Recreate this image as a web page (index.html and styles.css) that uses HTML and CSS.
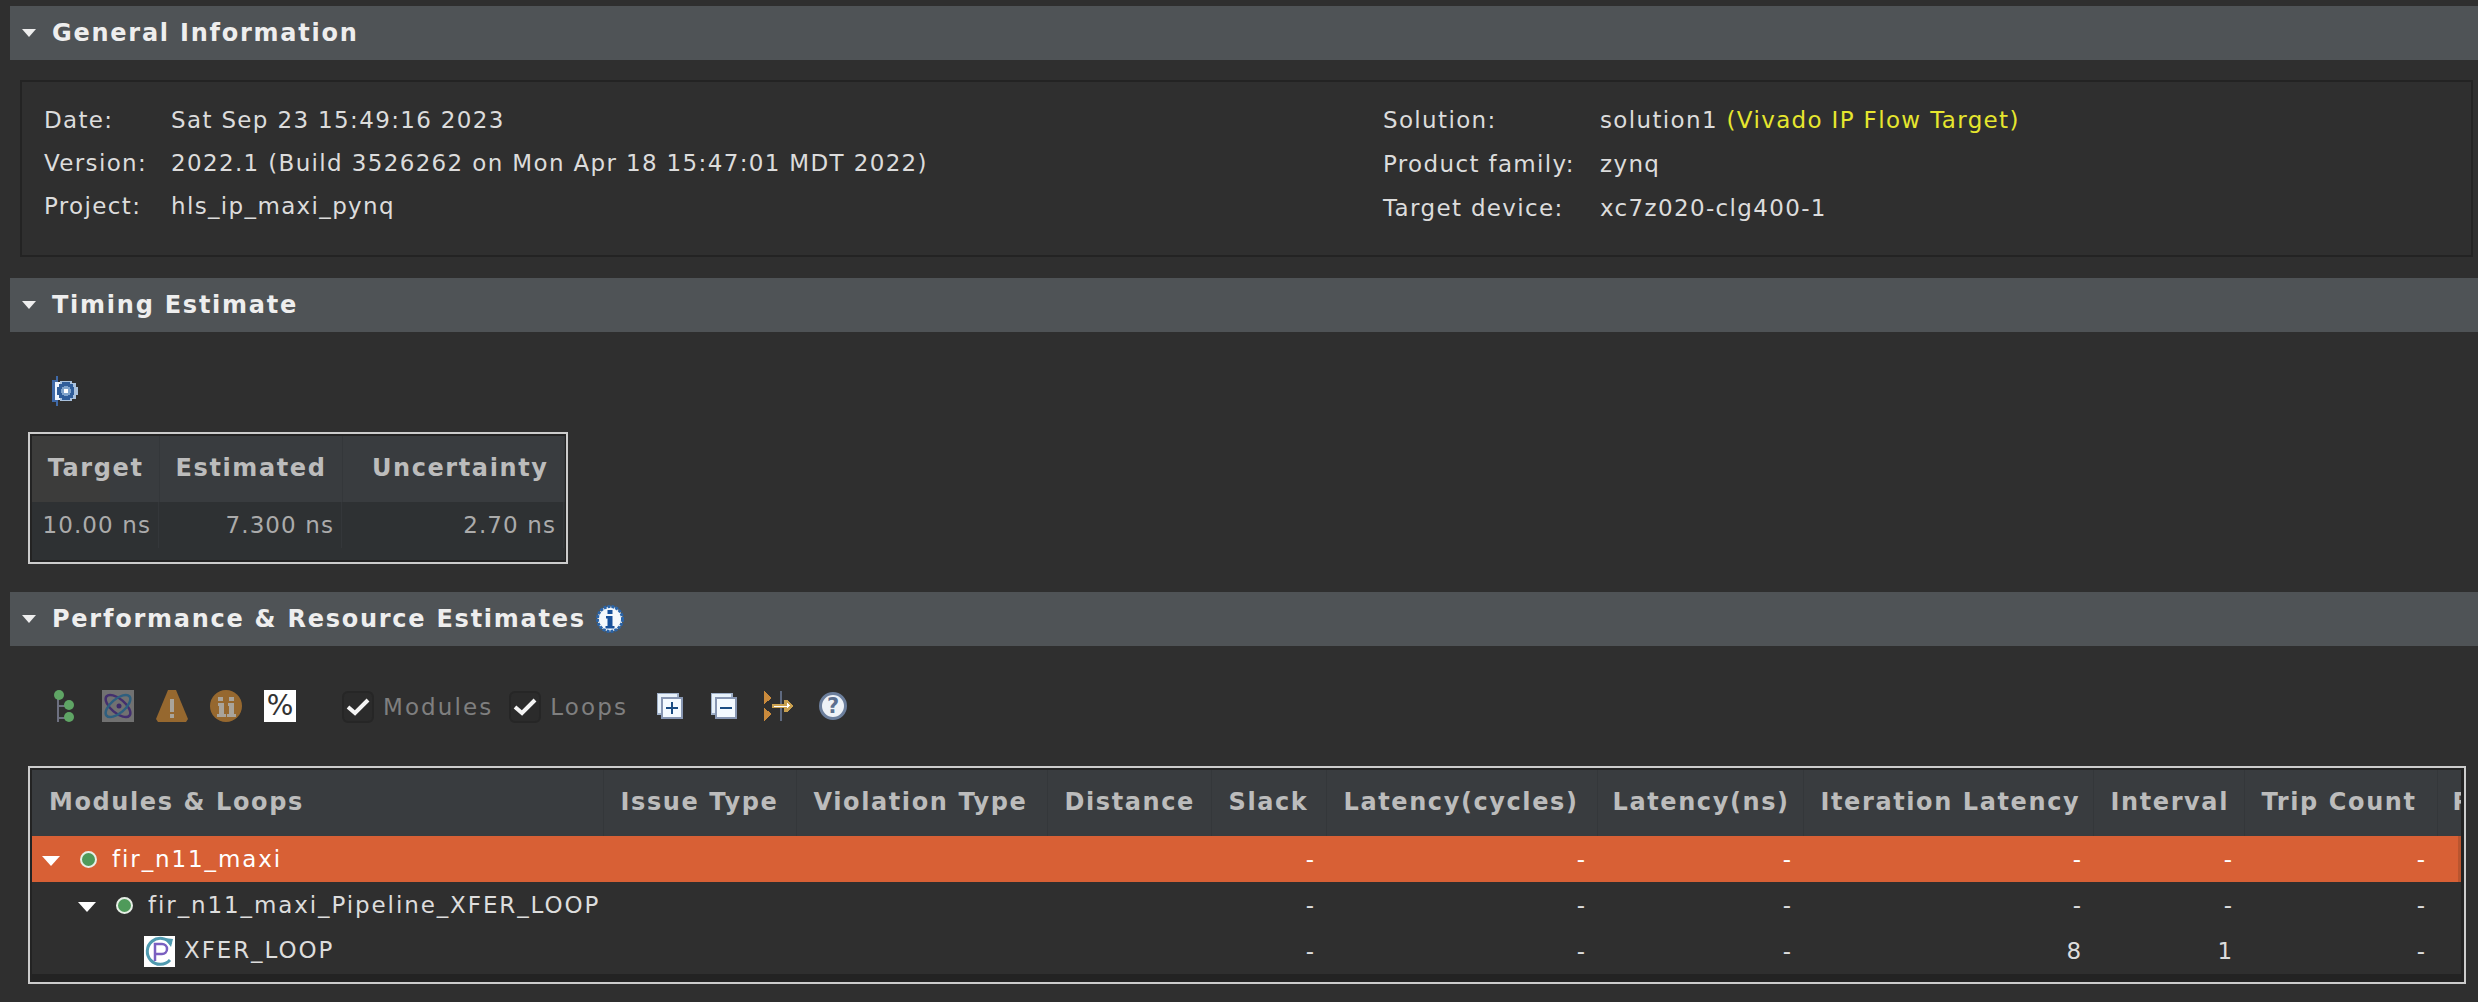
FILE: index.html
```html
<!DOCTYPE html>
<html lang="en">
  <head>
    <meta charset="UTF-8" />
    <title>Synthesis Summary</title>
    <link rel="stylesheet" href="styles.css">
  </head>
  <body>
    <h2 class="bar"><span class="arrow"></span>General Information</h2>
    <section class="info">
      <dl class="info-left">
        <dt>Date:</dt><dd>Sat Sep 23 15:49:16 2023</dd>
        <dt>Version:</dt><dd>2022.1 (Build 3526262 on Mon Apr 18 15:47:01 MDT 2022)</dd>
        <dt>Project:</dt><dd>hls_ip_maxi_pynq</dd>
      </dl>
      <dl class="info-right">
        <dt>Solution:</dt><dd>solution1 <span class="flow">(Vivado IP Flow Target)</span></dd>
        <dt>Product family:</dt><dd>zynq</dd>
        <dt>Target device:</dt><dd>xc7z020-clg400-1</dd>
      </dl>
    </section>

    <h2 class="bar"><span class="arrow"></span>Timing Estimate</h2>
    <section class="timing">
      <svg class="clock-icon" width="28" height="30" viewBox="0 0 28 30" shape-rendering="crispEdges">
        <rect x="4" y="0" width="2" height="30" fill="#3f69a8"/>
        <rect x="0" y="4" width="6" height="22" fill="#3f69a8"/>
        <rect x="3" y="6" width="10" height="18" fill="#eef5ff"/>
        <path d="M8 5h12v2h4v4h2v8h-2v4h-4v2H8z" fill="#a9c1dc"/>
        <path d="M7 8h3V6h8v2h3v3h1v8h-1v3h-3v2h-8v-2H7v-3H5v-8h2z" fill="#2f5d9a"/>
        <circle cx="14" cy="15" r="5" fill="#7fa3cc"/>
        <rect x="12" y="13" width="4" height="4" fill="#fff"/>
      </svg>
      <div class="frame timing-frame">
        <table class="grid timing-grid">
          <colgroup><col class="t1"><col class="t2"><col class="t3"></colgroup>
          <thead>
            <tr><th class="tile">Target</th><th>Estimated</th><th>Uncertainty</th></tr>
          </thead>
          <tbody>
            <tr><td>10.00 ns</td><td>7.300 ns</td><td>2.70 ns</td></tr>
          </tbody>
        </table>
      </div>
    </section>

    <h2 class="bar"><span class="arrow"></span>Performance &amp; Resource Estimates
      <svg class="bar-info" width="28" height="28" viewBox="0 0 28 28">
        <circle cx="14" cy="14" r="12.5" fill="#f4f8fc" stroke="#2a64a8" stroke-width="3" stroke-dasharray="3 1"/>
        <rect x="11.5" y="5" width="5" height="4" fill="#17509a"/>
        <path d="M10 11h6.500v10h2v2.500h-9V21h2v-7.500h-1.500z" fill="#17509a"/>
      </svg>
    </h2>
    <section class="perf">
      <div class="toolbar">
        <svg class="tool w20" width="20" height="32" viewBox="0 0 20 32">
          <path d="M4 8v24M4 16h12M4 28h12" stroke="#6d7080" stroke-width="2" fill="none"/>
          <circle cx="5" cy="5" r="5" fill="#5fa565"/>
          <circle cx="15" cy="15" r="5" fill="#5fa565"/>
          <circle cx="15" cy="27" r="5" fill="#5fa565"/>
        </svg>
        <svg class="tool w32" width="32" height="32" viewBox="0 0 32 32">
          <rect width="32" height="32" fill="#717171"/>
          <ellipse cx="16" cy="16" rx="15" ry="7" transform="rotate(40 16 16)" fill="none" stroke="#432f6e" stroke-width="2.500"/>
          <ellipse cx="16" cy="16" rx="15" ry="7" transform="rotate(-40 16 16)" fill="none" stroke="#2e5f7f" stroke-width="2.500"/>
          <circle cx="17" cy="16" r="2.500" fill="#3e2a6a"/>
        </svg>
        <svg class="tool w32" width="32" height="32" viewBox="0 0 32 32">
          <path d="M12 0h8l12 29-2 3H2l-2-3z" fill="#96682f"/>
          <rect x="14" y="9" width="4" height="13" fill="#a9a49b"/>
          <rect x="14" y="24" width="4" height="4" fill="#a9a49b"/>
        </svg>
        <svg class="tool w32" width="32" height="32" viewBox="0 0 32 32">
          <circle cx="16" cy="16" r="16" fill="#96682f"/>
          <path d="M8 7h5v4H8zM19 7h5v4h-5zM8 13h6v11h2v3H7v-3h2v-8H8zM18 13h6v11h2v3h-9v-3h2v-8h-1z" fill="#a9a49b"/>
        </svg>
        <span class="percent">%</span>
        <label class="check"><svg width="32" height="32" viewBox="0 0 32 32"><rect x="1" y="1" width="30" height="30" rx="5" fill="#2b2b2b" stroke="#262626" stroke-width="2"/><path d="M6 16l7 6L26 9" fill="none" stroke="#f4f4f4" stroke-width="4"/></svg>Modules</label>
        <label class="check"><svg width="32" height="32" viewBox="0 0 32 32"><rect x="1" y="1" width="30" height="30" rx="5" fill="#2b2b2b" stroke="#262626" stroke-width="2"/><path d="M6 16l7 6L26 9" fill="none" stroke="#f4f4f4" stroke-width="4"/></svg>Loops</label>
        <svg class="tool w26 first-action" width="26" height="26" viewBox="0 0 26 26" shape-rendering="crispEdges">
          <rect x="0" y="0" width="21" height="21" fill="#e8f2fb" stroke="#9fb0c8" stroke-width="2"/>
          <rect x="5" y="5" width="20" height="20" fill="#f4faff" stroke="#8796b2" stroke-width="2"/>
          <path d="M9 14h12v2H9zM14 9h2v12h-2z" fill="#1a4c82"/>
        </svg>
        <svg class="tool w26 collapse" width="26" height="26" viewBox="0 0 26 26" shape-rendering="crispEdges">
          <rect x="0" y="0" width="21" height="21" fill="#e8f2fb" stroke="#9fb0c8" stroke-width="2"/>
          <rect x="5" y="5" width="20" height="20" fill="#f4faff" stroke="#8796b2" stroke-width="2"/>
          <path d="M9 14h12v2H9z" fill="#1a4c82"/>
        </svg>
        <svg class="tool fit" width="30" height="30" viewBox="0 0 30 30" shape-rendering="crispEdges">
          <path d="M0 0l8 7-8 6zM0 17l8 6-8 7z" fill="#c98a3c"/>
          <rect x="16" y="0" width="2" height="30" fill="#5f6a80"/>
          <path d="M8 13h12V9h3l7 6-7 6h-3v-4H8z" fill="#c9a04f"/>
          <path d="M10 15h13v-3l3 3-3 2v-1H10z" fill="#fff"/>
        </svg>
        <svg class="tool help" width="28" height="28" viewBox="0 0 28 28">
          <circle cx="14" cy="14" r="12.500" fill="#eef2f7" stroke="#6c7f9d" stroke-width="3"/>
          <text x="14" y="21" text-anchor="middle" class="help-mark">?</text>
        </svg>
      </div>

      <div class="frame modules-frame">
        <table class="grid modules-grid">
          <colgroup>
            <col class="m1"><col class="m2"><col class="m3"><col class="m4"><col class="m5"><col class="m6">
            <col class="m7"><col class="m8"><col class="m9"><col class="m10"><col class="m11">
          </colgroup>
          <thead>
            <tr>
              <th>Modules &amp; Loops</th><th>Issue Type</th><th>Violation Type</th><th>Distance</th><th>Slack</th>
              <th>Latency(cycles)</th><th class="tight">Latency(ns)</th><th>Iteration Latency</th><th>Interval</th><th>Trip Count</th><th>Pipelined</th>
            </tr>
          </thead>
          <tbody>
            <tr class="selected">
              <td class="name depth0"><span class="tri"></span><span class="dot"></span>fir_n11_maxi</td>
              <td></td><td></td><td></td><td>-</td><td>-</td><td>-</td><td>-</td><td>-</td><td>-</td><td></td>
            </tr>
            <tr>
              <td class="name depth1"><span class="tri"></span><span class="dot"></span>fir_n11_maxi_Pipeline_XFER_LOOP</td>
              <td></td><td></td><td></td><td>-</td><td>-</td><td>-</td><td>-</td><td>-</td><td>-</td><td></td>
            </tr>
            <tr>
              <td class="name depth2">
                <svg class="loop-icon" width="31" height="31" viewBox="0 0 31 31">
                  <rect width="31" height="31" fill="#fff"/>
                  <path d="M27 8A13 13 0 1 0 26 24" fill="none" stroke="#4f9ab0" stroke-width="3"/>
                  <path d="M20 2l9 1-2 8z" fill="#4f9ab0"/>
                  <path d="M11 25V8h7a5 5 0 0 1 0 10h-7" fill="none" stroke="#7a5fc0" stroke-width="2.500"/>
                </svg>XFER_LOOP</td>
              <td></td><td></td><td></td><td>-</td><td>-</td><td>-</td><td>8</td><td>1</td><td>-</td><td></td>
            </tr>
          </tbody>
        </table>
      </div>
    </section>
  </body>
</html>
```

FILE: styles.css
```css
body {
  margin: 0;
  padding-top: 6px;
  background-color: #2f2f2f;
  font-family: "DejaVu Sans", sans-serif;
  font-size: 23px;
  letter-spacing: 1.35px;
  color: #dcdcdc;
  overflow: hidden;
}

.bar {
  display: flex;
  align-items: center;
  height: 54px;
  margin: 0 0 0 10px;
  background-color: #4f5356;
  color: #eeeeee;
  font-size: 24px;
  font-weight: bold;
  letter-spacing: 1.75px;
}

.arrow {
  width: 0;
  height: 0;
  margin: 0 16px 0 12px;
  border-left: 7px solid transparent;
  border-right: 7px solid transparent;
  border-top: 8px solid #eeeeee;
}

.bar-info {
  margin-left: 10px;
}

/* general information */
.info {
  display: flex;
  box-sizing: border-box;
  height: 177px;
  margin: 20px 5px 21px 20px;
  padding: 16px 0 0 22px;
  border: 2px solid #232323;
}

.info dl {
  display: grid;
  align-items: center;
  margin: 0;
  align-self: flex-start;
}

.info dd {
  margin: 0;
  white-space: nowrap;
}

.info-left {
  grid-template-columns: 127px 1fr;
  grid-auto-rows: 43px;
  width: 1339px;
}

.info-right {
  grid-template-columns: 217px 1fr;
  grid-auto-rows: 44px;
}

.flow {
  color: #e6e62e;
}

/* timing */
.timing {
  padding: 44px 0 28px 0;
}

.clock-icon {
  display: block;
  margin: 0 0 26px 52px;
}

.frame {
  box-sizing: border-box;
  margin-left: 28px;
  border: 2px solid #cccccc;
  background-color: #232323;
  padding: 2px;
  overflow: hidden;
}

.timing-frame {
  width: 540px;
  height: 132px;
}

.modules-frame {
  width: 2438px;
  height: 218px;
}

.grid {
  table-layout: fixed;
  border-collapse: collapse;
  border-spacing: 0;
}

.grid th {
  height: 66px;
  box-sizing: border-box;
  padding: 0 17px 3px;
  background-color: #393c3f;
  border-right: 1px solid #34373a;
  color: #bcbcbc;
  font-size: 24px;
  font-weight: bold;
  letter-spacing: 1.6px;
  white-space: nowrap;
  overflow: hidden;
}

.grid th.tight {
  padding-left: 15px;
}

.grid td {
  height: 46px;
  padding: 0 10px;
  text-align: right;
  white-space: nowrap;
  overflow: hidden;
}

.timing-grid {
  width: 532px;
  height: 124px;
  background-color: #2e3133;
}

.timing-grid th {
  padding-left: 0;
  padding-right: 15px;
  text-align: right;
}

.timing-grid th.tile {
  background: linear-gradient(to right, #3c3c3b 78px, #393c3f 78px);
}

.timing-grid td {
  vertical-align: top;
  height: 58px;
  padding: 10px 8px 0 0;
  box-sizing: border-box;
  color: #ababab;
  letter-spacing: 1.1px;
  background: linear-gradient(#34373a, #34373a) right top / 1px 46px no-repeat;
}

.t1 { width: 127px; }
.t2 { width: 183px; }
.t3 { width: 222px; }

/* modules and loops */
.toolbar {
  display: flex;
  align-items: center;
  height: 32px;
  padding: 44px 0 44px 54px;
}

.tool {
  flex: none;
}

.w20 { margin-right: 28px; }
.w32 { margin-right: 22px; }

.percent {
  width: 32px;
  height: 32px;
  margin-right: 46px;
  background-color: #ffffff;
  color: #333333;
  font-size: 28px;
  letter-spacing: 0;
  line-height: 32px;
  text-align: center;
}

.check {
  display: flex;
  align-items: center;
  gap: 9px;
  margin-right: 16px;
  padding-top: 1px;
  color: #7f7f7f;
  letter-spacing: 2.1px;
}

.first-action { margin-left: 13px; margin-right: 28px; }
.collapse { margin-right: 27px; }
.fit { margin-right: 25px; }

.help-mark {
  fill: #5b6f8f;
  font-family: "DejaVu Sans", sans-serif;
  font-size: 21px;
  font-weight: bold;
  letter-spacing: 0;
}

.modules-grid {
  width: 2429px;
  margin-bottom: 6px;
  background-color: #2f2f2f;
}

.modules-grid th {
  text-align: left;
}

.modules-grid td {
  padding-right: 10px;
  color: #dddddd;
  letter-spacing: 1.9px;
}

.modules-grid th:last-child {
  padding-left: 15px;
  padding-right: 0;
  border-right: none;
  text-overflow: clip;
}

.m1 { width: 571px; }
.m2 { width: 193px; }
.m3 { width: 251px; }
.m4 { width: 164px; }
.m5 { width: 115px; }
.m6 { width: 271px; }
.m7 { width: 206px; }
.m8 { width: 290px; }
.m9 { width: 151px; }
.m10 { width: 193px; }
.m11 { width: 24px; }

.selected td {
  background-color: #d86035;
  color: #ffffff;
}

.selected td:last-child {
  background: linear-gradient(to right, #d86035 21px, #b9552f 21px);
}

.grid td.name {
  padding: 0;
  text-align: left;
}

.depth0 { padding-left: 10px !important; }
.depth1 { padding-left: 46px !important; }
.depth2 { padding-left: 112px !important; }

.tri {
  display: inline-block;
  width: 0;
  height: 0;
  margin-right: 20px;
  vertical-align: middle;
  border-left: 9px solid transparent;
  border-right: 9px solid transparent;
  border-top: 10px solid #ffffff;
}

.dot {
  display: inline-block;
  box-sizing: border-box;
  width: 17px;
  height: 17px;
  margin-right: 15px;
  vertical-align: -1px;
  border: 2px solid #e6efe6;
  border-radius: 50%;
  background-color: #4f9a5a;
}

.loop-icon {
  margin-right: 9px;
  vertical-align: middle;
}
```
